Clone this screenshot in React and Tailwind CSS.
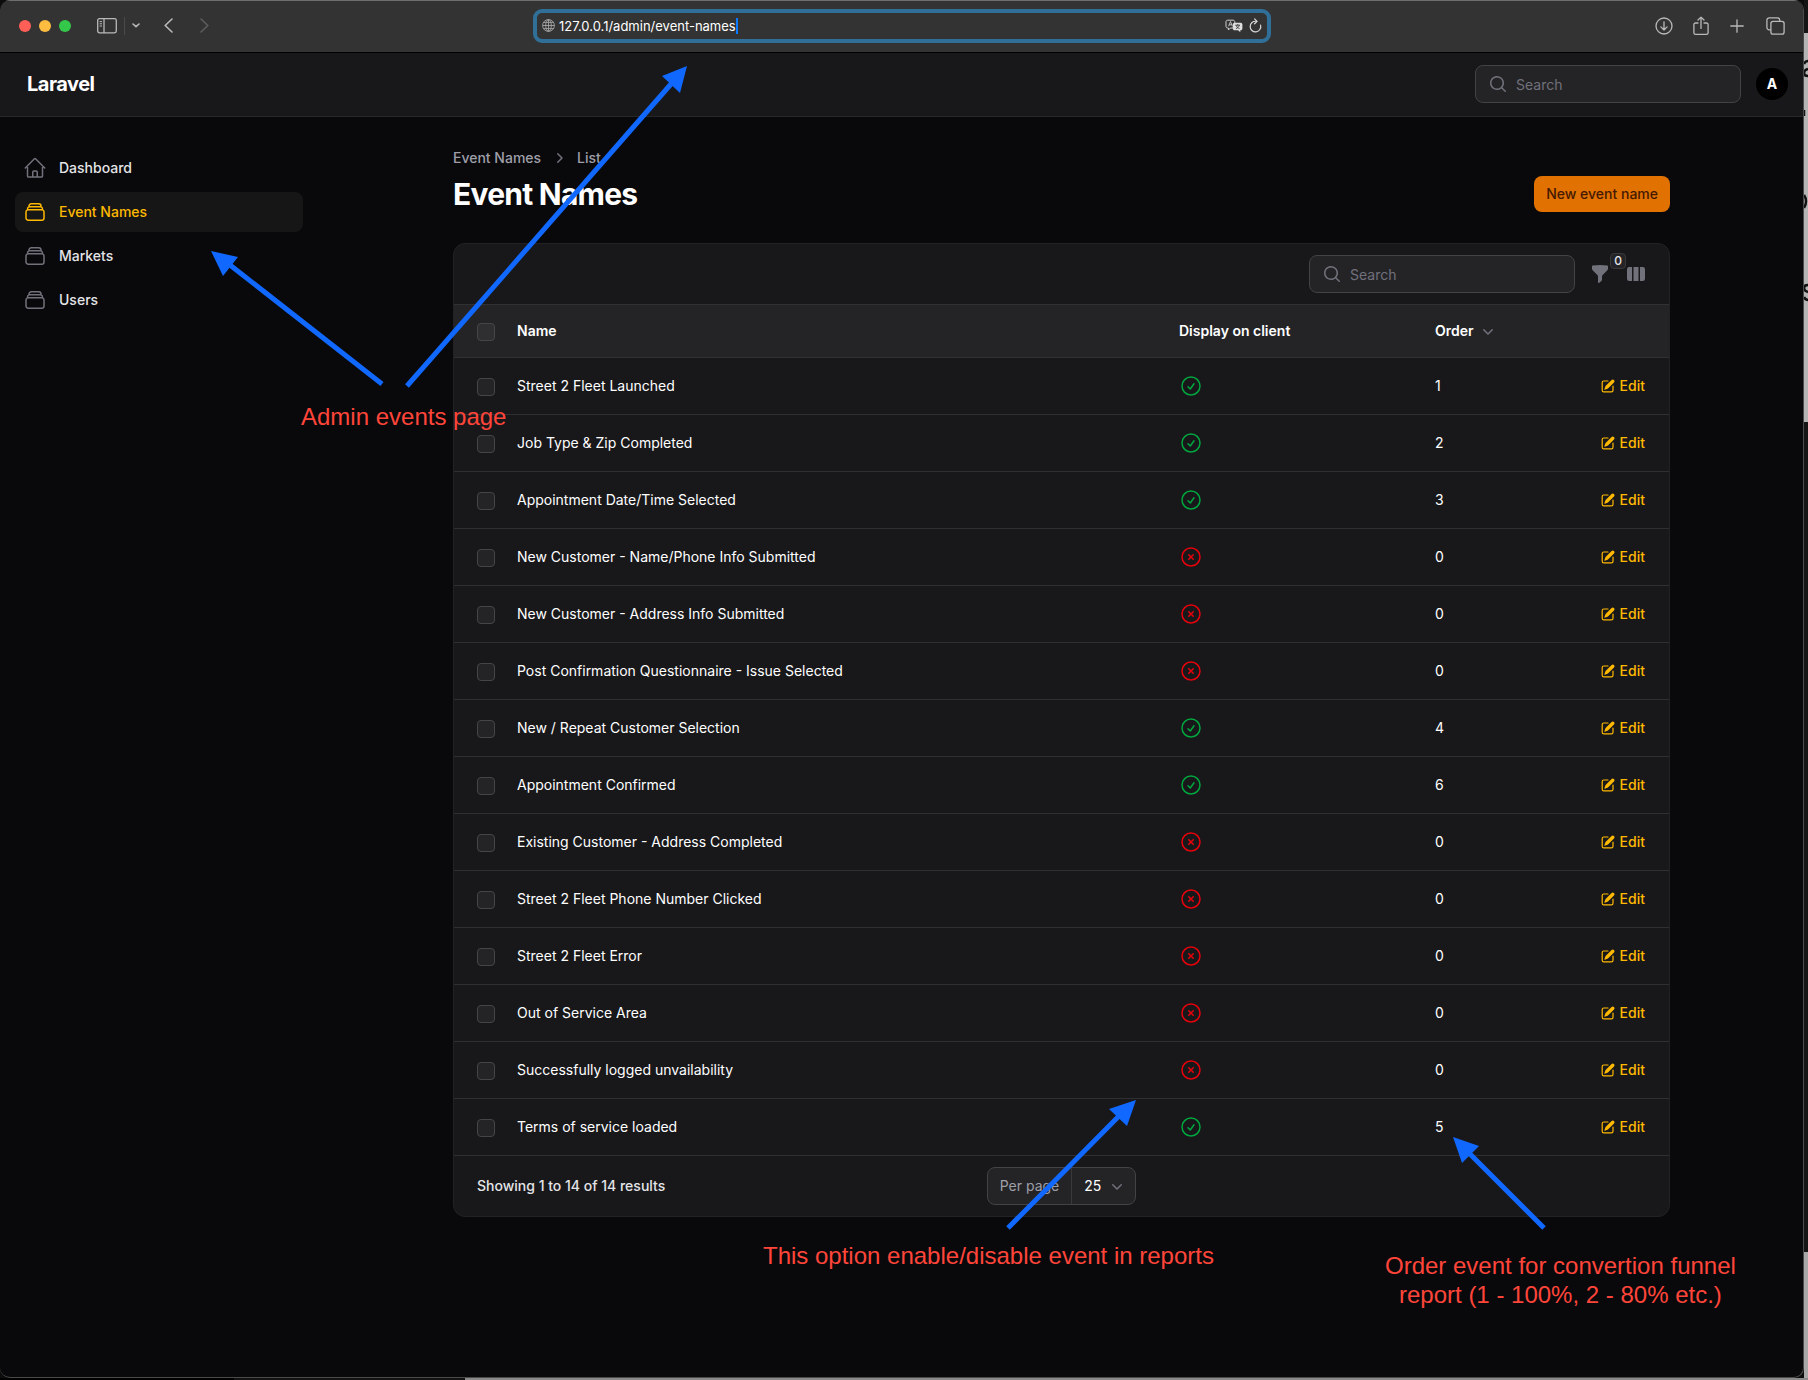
import React from "react";
import {
  HiOutlineHome,
  HiOutlineRectangleStack,
  HiOutlineCheckCircle,
  HiOutlineXCircle,
  HiMiniMagnifyingGlass,
  HiMiniChevronRight,
  HiMiniChevronDown,
  HiMiniFunnel,
  HiMiniViewColumns,
  HiMiniPencilSquare,
} from "react-icons/hi2";

const NAV = [
  { label: "Dashboard", Icon: HiOutlineHome },
  { label: "Event Names", Icon: HiOutlineRectangleStack, active: true },
  { label: "Markets", Icon: HiOutlineRectangleStack },
  { label: "Users", Icon: HiOutlineRectangleStack },
];

const ROWS = [
  ["Street 2 Fleet Launched", true, 1],
  ["Job Type & Zip Completed", true, 2],
  ["Appointment Date/Time Selected", true, 3],
  ["New Customer - Name/Phone Info Submitted", false, 0],
  ["New Customer - Address Info Submitted", false, 0],
  ["Post Confirmation Questionnaire - Issue Selected", false, 0],
  ["New / Repeat Customer Selection", true, 4],
  ["Appointment Confirmed", true, 6],
  ["Existing Customer - Address Completed", false, 0],
  ["Street 2 Fleet Phone Number Clicked", false, 0],
  ["Street 2 Fleet Error", false, 0],
  ["Out of Service Area", false, 0],
  ["Successfully logged unvailability", false, 0],
  ["Terms of service loaded", true, 5],
];

function BrowserBar() {
  return (
    <div className="flex h-[53px] items-center border-t border-b border-t-[#6e6e6e] border-b-black bg-[#333333] pb-[2px] text-[#b9b9b9]">
      <div className="flex flex-1 items-center pl-[19px]">
        <div className="flex gap-2">
          <button aria-label="Close" className="size-3 rounded-full bg-[#ff5f57]" />
          <button aria-label="Minimize" className="size-3 rounded-full bg-[#febc40]" />
          <button aria-label="Zoom" className="size-3 rounded-full bg-[#34c84a]" />
        </div>
        <button aria-label="Show sidebar" className="ml-[26px]">
          <svg width="20" height="16" viewBox="0 0 20 16" fill="none" stroke="currentColor" strokeWidth="1.3">
            <rect x="0.7" y="0.7" width="18.6" height="14.2" rx="1.8" />
            <path d="M7 .7v14.2" />
            <path d="M2.6 3.6h2.4M2.6 5.8h2.4M2.6 8h2.4" strokeWidth="1" />
          </svg>
        </button>
        <span className="ml-[7px] h-[18px] w-px bg-[#4a4a4a]" />
        <button aria-label="Tab groups" className="ml-[7px]">
          <svg width="8" height="5" viewBox="0 0 8 5" fill="none" stroke="currentColor" strokeWidth="1.6" strokeLinecap="round" strokeLinejoin="round">
            <path d="M1 1l3 2.7L7 1" />
          </svg>
        </button>
        <button aria-label="Back" className="ml-6">
          <svg width="9" height="15" viewBox="0 0 9 15" fill="none" stroke="currentColor" strokeWidth="1.6" strokeLinecap="round" strokeLinejoin="round">
            <path d="M8 1L1.2 7.5 8 14" />
          </svg>
        </button>
        <button aria-label="Forward" className="ml-[27px] text-[#5c5c5c]">
          <svg width="9" height="15" viewBox="0 0 9 15" fill="none" stroke="currentColor" strokeWidth="1.6" strokeLinecap="round" strokeLinejoin="round">
            <path d="M1 1l6.8 6.5L1 14" />
          </svg>
        </button>
      </div>

      <div className="flex h-[34px] w-[738px] items-center rounded-[9px] border-4 border-[#2f6f98] bg-[#333333] pr-[5px] pl-[5px]">
        <svg width="13" height="13" viewBox="0 0 13 13" fill="none" stroke="#a5a5a5" strokeWidth="0.9" className="shrink-0">
          <circle cx="6.5" cy="6.5" r="5.9" />
          <ellipse cx="6.5" cy="6.5" rx="2.8" ry="5.9" />
          <path d="M6.5.6v11.8M.6 6.5h11.8M1.5 3.4h10M1.5 9.6h10" />
        </svg>
        <div className="ml-1 flex min-w-0 flex-1 items-center">
          <input
            aria-label="Address"
            defaultValue="127.0.0.1/admin/event-names"
            className="field-sizing-content bg-transparent text-[13px] leading-4 text-white outline-none"
          />
          <span className="h-4 w-[2px] bg-[#0a7aff]" />
        </div>
        <button aria-label="Translate">
          <svg width="18" height="14" viewBox="0 0 18 14" fill="none">
            <path d="M2.6 1.2h5.6c.9 0 1.6.7 1.6 1.6v4.6c0 .9-.7 1.6-1.6 1.6H5.4L3.4 11V9h-.8C1.700 9 1 8.300 1 7.400V2.800c0-.9.7-1.600 1.600-1.600z" stroke="#d0d0d0" />
            <path d="M3.600 7.200l1.900-4.600 1.900 4.600M4.300 5.800h2.400" stroke="#d0d0d0" strokeWidth="0.9" />
            <path d="M9.600 3.700h6c1 0 1.800.8 1.800 1.800v4c0 1-.8 1.800-1.800 1.800h-.3v2l-2.200-2H9.600c-1 0-1.800-.8-1.800-1.800v-4c0-1 .8-1.800 1.800-1.800z" fill="#dedede" />
            <path d="M10.400 6.200h4.600M12.700 5.200v1M14.300 6.400c-.6 1.500-1.800 2.700-3.400 3.200M11.200 6.500c.6 1.400 1.700 2.500 3.300 3" stroke="#333" strokeWidth="0.9" />
          </svg>
        </button>
        <button aria-label="Reload" className="ml-[6px]">
          <svg width="13" height="15" viewBox="0 0 13 15" fill="none" stroke="#d8d8d8" strokeWidth="1.2" strokeLinecap="round" strokeLinejoin="round">
            <path d="M11.600 7.200a5.300 5.300 0 1 1-4.300-3.900" />
            <path d="M5.600.9l2.500 2.500-2.500 2.400" />
          </svg>
        </button>
      </div>

      <div className="flex flex-1 items-center justify-end pr-[18px]">
        <button aria-label="Downloads">
          <svg width="18" height="18" viewBox="0 0 18 18" fill="none" stroke="currentColor" strokeWidth="1.3" strokeLinecap="round" strokeLinejoin="round">
            <circle cx="9" cy="9" r="8" />
            <path d="M9 4.800v8M5.900 9.900L9 13l3.100-3.100" />
          </svg>
        </button>
        <button aria-label="Share" className="ml-5">
          <svg width="16" height="20" viewBox="0 0 16 20" fill="none" stroke="currentColor" strokeWidth="1.300" strokeLinecap="round" strokeLinejoin="round">
            <path d="M5 7H2.600C1.600 7 .9 7.700.9 8.600v8.200c0 .9.7 1.600 1.700 1.600h10.800c1 0 1.700-.7 1.700-1.600V8.600c0-.9-.7-1.600-1.700-1.600H11" />
            <path d="M8 12.400V1.200M5 4l3-2.900L11 4" />
          </svg>
        </button>
        <button aria-label="New tab" className="ml-[21px]">
          <svg width="14" height="14" viewBox="0 0 14 14" fill="none" stroke="currentColor" strokeWidth="1.300" strokeLinecap="round">
            <path d="M7 .8v12.400M.8 7h12.400" />
          </svg>
        </button>
        <button aria-label="Tab overview" className="ml-[22px]">
          <svg width="19" height="18" viewBox="0 0 19 18" fill="none" stroke="currentColor" strokeWidth="1.300">
            <path d="M4.800 12.800H3.200c-1.300 0-2.300-1-2.300-2.200V3.100C.9 1.900 1.900.9 3.200.9h8.200c1.300 0 2.300 1 2.300 2.200v1" />
            <rect x="4.900" y="4.300" width="13.200" height="12.800" rx="2.200" />
          </svg>
        </button>
      </div>
    </div>
  );
}

function SearchBox({ label }) {
  return (
    <label className="flex h-[38px] w-[266px] items-center gap-2 rounded-lg border border-[#434346] bg-[#242427] pr-3 pl-3">
      <HiMiniMagnifyingGlass className="size-5 shrink-0 text-[#71717b]" />
      <input
        type="search"
        aria-label={label}
        placeholder="Search"
        className="min-w-0 flex-1 bg-transparent pt-[2px] text-sm text-white outline-none placeholder:text-[#71717b]"
      />
    </label>
  );
}

function Checkbox({ label }) {
  return (
    <input
      type="checkbox"
      aria-label={label}
      className="mt-[2px] block size-[18px] appearance-none rounded border border-[#454548] bg-white/5"
    />
  );
}

function Header() {
  return (
    <header className="flex h-16 items-center justify-between border-b border-[#27272a] bg-[#18181b] pr-[15px] pb-px pl-[27px]">
      <a href="#" className="text-xl leading-5 font-bold tracking-tight text-white">
        Laravel
      </a>
      <div className="flex items-center gap-[15px]">
        <SearchBox label="Global search" />
        <button aria-label="User menu" className="size-8 rounded-full bg-black text-sm font-bold text-white">
          A
        </button>
      </div>
    </header>
  );
}

function Sidebar() {
  return (
    <nav className="flex w-80 shrink-0 flex-col gap-1 py-[31px] pr-[17px] pl-[15px]">
      {NAV.map(({ label, Icon, active }) => (
        <a
          key={label}
          href="#"
          className={
            active
              ? "flex items-center gap-3 rounded-lg bg-[#161616] p-2 text-sm font-medium text-[#ffb900]"
              : "flex items-center gap-3 rounded-lg p-2 text-sm font-medium text-[#e4e4e7]"
          }
        >
          <Icon className={active ? "size-6" : "size-6 text-[#71717b]"} />
          {label}
        </a>
      ))}
    </nav>
  );
}

function EventTable() {
  return (
    <table className="w-full table-fixed text-left text-sm text-white">
      <colgroup>
        <col className="w-[51px]" />
        <col />
        <col className="w-[256px]" />
        <col className="w-[130px]" />
        <col className="w-[116px]" />
      </colgroup>
      <thead>
        <tr className="h-[52px] border-b border-[#313134] bg-[#242427]">
          <th className="pl-[23px]">
            <Checkbox label="Select all" />
          </th>
          <th className="px-3 font-semibold">Name</th>
          <th className="px-3 font-semibold">Display on client</th>
          <th className="px-3 font-semibold">
            <button className="flex items-center gap-1">
              Order
              <HiMiniChevronDown className="size-5 text-[#71717b]" />
            </button>
          </th>
          <th aria-label="Actions" />
        </tr>
      </thead>
      <tbody>
        {ROWS.map(([name, shown, order]) => (
          <tr key={name} className="h-[57px] border-b border-[#2f2f32]">
            <td className="pl-[23px]">
              <Checkbox label={"Select " + name} />
            </td>
            <td className="px-3">{name}</td>
            <td className="px-3">
              {shown ? (
                <HiOutlineCheckCircle className="size-6 text-[#00a63e]" />
              ) : (
                <HiOutlineXCircle className="size-6 text-[#e7000b]" />
              )}
            </td>
            <td className="px-3">{order}</td>
            <td className="pr-6">
              <a href="#" className="flex items-center justify-end gap-1 font-medium text-[#ffb900]">
                <HiMiniPencilSquare className="size-4" />
                Edit
              </a>
            </td>
          </tr>
        ))}
      </tbody>
    </table>
  );
}

function MainContent() {
  return (
    <main className="flex min-w-0 flex-1 justify-center px-8 pt-[31px] pb-8">
      <div className="w-full max-w-[1217px]">
        <div className="flex items-end justify-between">
          <div>
            <nav aria-label="Breadcrumb" className="mb-2 flex items-center gap-2 text-sm font-medium text-[#9f9fa9]">
              <a href="#">Event Names</a>
              <HiMiniChevronRight className="size-5 text-[#71717b]" />
              <a href="#">List</a>
            </nav>
            <h1 className="text-3xl leading-9 font-bold tracking-tight text-white">Event Names</h1>
          </div>
          <button className="h-9 rounded-lg bg-[#e17100] px-3 text-sm font-medium text-[#461901]">
            New event name
          </button>
        </div>

        <section className="mt-[31px] overflow-hidden rounded-xl border border-[#222225] bg-[#18181b]">
          <div className="flex h-[61px] items-center justify-end border-b border-[#313134] pr-[23px]">
            <SearchBox label="Search event names" />
            <button aria-label="Filters" className="relative ml-[15px] text-[#71717b]">
              <HiMiniFunnel className="size-5" />
              <span className="absolute -top-[11px] left-5 flex h-4 w-4 items-center justify-center rounded border border-[#39393c] bg-[#242427] text-xs leading-none font-medium text-[#e4e4e7]">
                0
              </span>
            </button>
            <button aria-label="Columns" className="ml-4 text-[#71717b]">
              <HiMiniViewColumns className="size-5" />
            </button>
          </div>

          <EventTable />

          <div className="grid h-[60px] grid-cols-3 items-center px-[23px]">
            <span className="text-sm font-medium text-[#e4e4e7]">Showing 1 to 14 of 14 results</span>
            <label className="flex h-[38px] items-stretch justify-self-center rounded-lg border border-[#434346] bg-[#242427] text-sm">
              <span className="flex items-center border-r border-[#39393c] px-3 text-[#9f9fa9]">Per page</span>
              <span className="relative flex items-center">
                <select className="h-full w-[63px] appearance-none bg-transparent pl-3 text-white outline-none" defaultValue="25">
                  <option>10</option>
                  <option>25</option>
                  <option>50</option>
                </select>
                <HiMiniChevronDown className="pointer-events-none absolute right-2 size-5 text-[#71717b]" />
              </span>
            </label>
          </div>
        </section>
      </div>
    </main>
  );
}

const ARROWS = [
  { line: "M382 384L230 265", head: "211,251 238,257 223,276" },
  { line: "M407 386L671 84", head: "687,66 662,76 680,93" },
  { line: "M1008 1228L1119 1116", head: "1136,1100 1109,1109 1127,1126" },
  { line: "M1544 1228L1470 1154", head: "1453,1137 1479,1146 1462,1163" },
];

function Annotations() {
  return (
    <div className="pointer-events-none absolute inset-0 overflow-hidden font-['Liberation_Sans',Arial,sans-serif] text-2xl leading-[29px] whitespace-nowrap text-[#ff453a]">
      <svg className="absolute top-0 left-0" width="1808" height="1380" viewBox="0 0 1808 1380" fill="none">
        {ARROWS.map(({ line, head }) => (
          <g key={head}>
            <path d={line} stroke="#1068ff" strokeWidth="5" />
            <polygon points={head} fill="#1068ff" />
          </g>
        ))}
      </svg>
      <p className="absolute top-[402px] left-[301px]">Admin events page</p>
      <p className="absolute top-[1241px] left-[763px]">This option enable/disable event in reports</p>
      <p className="absolute top-[1251px] left-[1385px] text-center">
        Order event for convertion funnel
        <br />
        report (1 - 100%, 2 - 80% etc.)
      </p>
    </div>
  );
}

export default function App() {
  return (
    <div className="relative flex min-h-screen flex-col bg-[#0c0c0c] font-[Inter,sans-serif]">
      <div className="flex flex-1">
        <div className="flex min-w-0 flex-1 flex-col overflow-hidden rounded-[10px] border-r border-b border-[#4a4a4a] bg-[#09090b]">
          <BrowserBar />
          <Header />
          <div className="flex flex-1">
            <Sidebar />
            <MainContent />
          </div>
        </div>
        {/* Windows behind the browser, visible along its right edge */}
        <div className="flex w-1 flex-col bg-[#151515]">
          <div className="mt-[33px] h-[389px] bg-[#b4b4b4]">
            <svg width="4" height="389" viewBox="0 0 4 389" fill="none" stroke="#111" strokeWidth="2.500">
              <path d="M0 31q1-3 4-3M4 36q-4 1-4 4t4 3M0 77v6M0 162q4 6 0 13M4 252q-4 0-4 3t4 4M0 264q1 3 4 3" />
            </svg>
          </div>
          <div className="mt-auto h-[126px] bg-[#a8a8a8]" />
        </div>
      </div>
      <div className="flex h-[2px]">
        <div className="w-[234px] bg-black" />
        <div className="w-[231px] bg-[#121212]" />
        <div className="flex-1 bg-[#8a8a8a]" />
      </div>
      <Annotations />
    </div>
  );
}
